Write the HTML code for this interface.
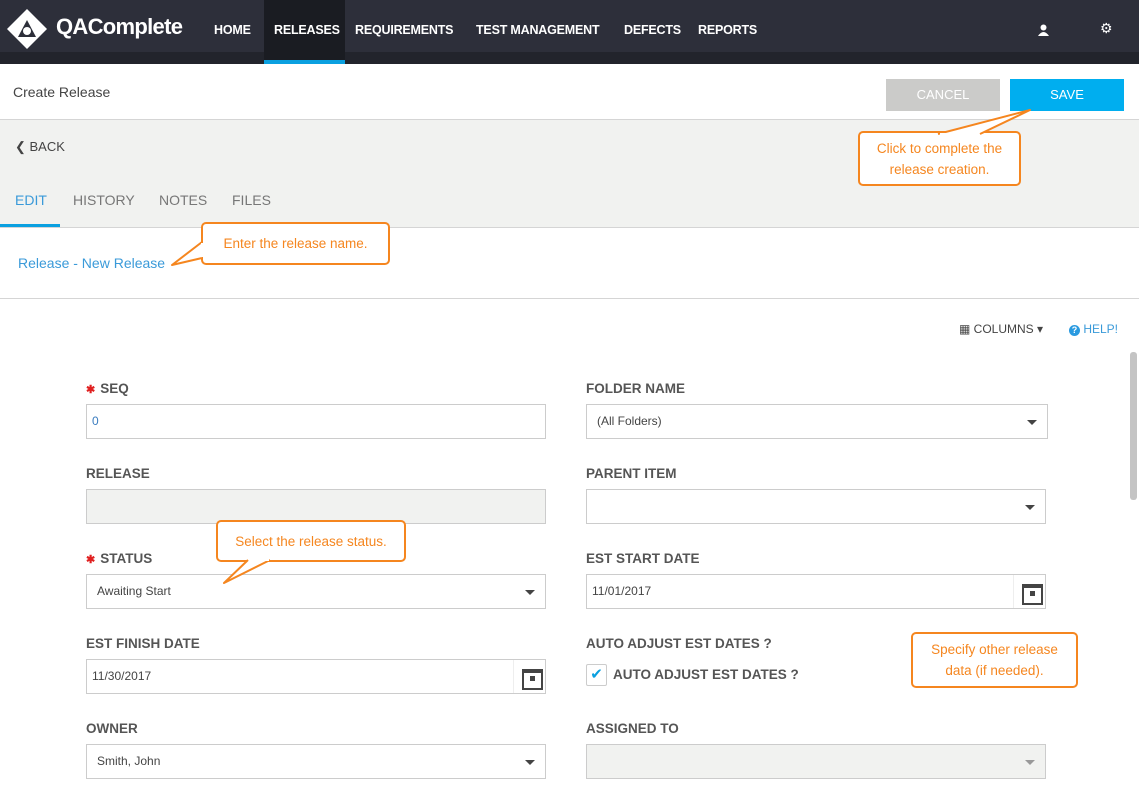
<!DOCTYPE html>
<html><head><style>
*{box-sizing:border-box;margin:0;padding:0}
body{width:1139px;height:805px;overflow:hidden;background:#fff;font-family:"Liberation Sans",sans-serif;position:relative}
.a{position:absolute}
.nav{left:0;top:0;width:1139px;height:52px;background:#2d2f3a}
.nav2{left:0;top:52px;width:1139px;height:12px;background:#22242c}
.ni{top:0;height:60px;line-height:60px;color:#fff;font-weight:bold;font-size:12.5px;padding:0 10px;letter-spacing:-0.2px}
.lbl{font-size:13.5px;font-weight:bold;color:#555}
.inp{border:1px solid #ccc;height:35px;background:#fff;font-size:12px;color:#444;line-height:33px;padding-left:10px}
.caret{position:absolute;right:10px;top:15px;border-left:5px solid transparent;border-right:5px solid transparent;border-top:5px solid #444}
.co{border:2px solid #f5861f;border-radius:5px;background:#fff;color:#f5861f;font-size:14px;text-align:center;line-height:21px}
.cal{position:absolute;right:0;top:0;width:32px;height:33px;border-left:1px solid #eee}
.cal:before{content:"";position:absolute;left:8px;top:9px;width:17px;height:15px;border:2px solid #444;border-top-width:4px}
.cal:after{content:"";position:absolute;left:16px;top:16px;width:5px;height:5px;background:#444}
.star{color:#e02020;font-size:11px;margin-right:5px}
</style></head><body>
<div class="a nav"></div><div class="a nav2"></div>
<svg class="a" style="left:6px;top:8px" width="42" height="42" viewBox="0 0 42 42"><path d="M21 1 L41 21 L21 41 L1 21Z" fill="#fff"/><path d="M21 12 L12 29 L30 29 Z" fill="#2d2f3a"/><circle cx="21" cy="23" r="4" fill="#fff"/></svg>
<div class="a" style="left:56px;top:14px;color:#fff;font-size:22px;font-weight:bold;letter-spacing:-0.7px">QAComplete</div>
<div class="a ni" style="left:204px">HOME</div>
<div class="a ni" style="left:264px;width:81px;background:#1a1c22;height:60px">RELEASES</div>
<div class="a" style="left:264px;top:60px;width:81px;height:4px;background:#0aa0e0"></div>
<div class="a ni" style="left:345px">REQUIREMENTS</div>
<div class="a ni" style="left:466px">TEST MANAGEMENT</div>
<div class="a ni" style="left:614px">DEFECTS</div>
<div class="a ni" style="left:688px">REPORTS</div>
<svg class="a" style="left:1038px;top:24px" width="11" height="12"><circle cx="5.5" cy="3.5" r="3" fill="#fff"/><path d="M0 12 Q5.5 4 11 12Z" fill="#fff"/></svg>
<div class="a" style="left:1100px;top:20px;color:#fff;font-size:14px">⚙</div>

<div class="a" style="left:13px;top:84px;font-size:14px;color:#444">Create Release</div>
<div class="a" style="left:886px;top:79px;width:114px;height:32px;background:#cbcbc9;color:#fff;font-size:13px;text-align:center;line-height:32px">CANCEL</div>
<div class="a" style="left:1010px;top:79px;width:114px;height:32px;background:#00aeef;color:#fff;font-size:13px;text-align:center;line-height:32px">SAVE</div>
<div class="a" style="left:0;top:119px;width:1139px;height:109px;background:#f1f2f0;border-top:1px solid #d5d5d5;border-bottom:1px solid #d5d5d5"></div>
<div class="a" style="left:15px;top:139px;font-size:13px;color:#444">&#10094; BACK</div>
<div class="a" style="left:15px;top:192px;font-size:14px;color:#3a9ad9">EDIT</div>
<div class="a" style="left:0;top:224px;width:60px;height:3px;background:#0aa0e0"></div>
<div class="a" style="left:73px;top:192px;font-size:14px;color:#777">HISTORY</div>
<div class="a" style="left:159px;top:192px;font-size:14px;color:#777">NOTES</div>
<div class="a" style="left:232px;top:192px;font-size:14px;color:#777">FILES</div>

<div class="a co" style="left:858px;top:131px;width:163px;height:55px;padding-top:5px;font-size:13.5px">Click to complete the<br>release creation.</div>
<svg class="a" style="left:900px;top:100px" width="140" height="40"><path d="M38 34 L130 10 L80 34" fill="#fff" stroke="#f5861f" stroke-width="2" stroke-linejoin="round"/><rect x="40" y="33" width="38" height="5" fill="#fff"/></svg>

<div class="a" style="left:18px;top:255px;font-size:14px;color:#3a9ad9">Release - New Release</div>
<div class="a co" style="left:201px;top:222px;width:189px;height:43px;line-height:40px;font-size:13.5px">Enter the release name.</div>
<svg class="a" style="left:165px;top:230px" width="45" height="40"><path d="M37 12 L7 35 L37 28" fill="#fff" stroke="#f5861f" stroke-width="2" stroke-linejoin="round"/><rect x="36" y="13" width="5" height="14" fill="#fff"/></svg>
<div class="a" style="left:0;top:298px;width:1139px;height:1px;background:#d5d5d5"></div>

<div class="a" style="left:959px;top:322px;font-size:12px;color:#444">▦ COLUMNS ▾</div>
<div class="a" style="left:1069px;top:322px;font-size:12px;color:#3a9ad9"><span style="display:inline-block;width:11px;height:11px;border-radius:50%;background:#2a9ae0;color:#fff;font-size:9px;text-align:center;line-height:11px;font-weight:bold">?</span> HELP!</div>
<div class="a" style="left:1130px;top:352px;width:7px;height:148px;background:#c4c4c4;border-radius:3px"></div>

<div class="a lbl" style="left:86px;top:381px"><span class="star">✱</span>SEQ</div>
<div class="a inp" style="left:86px;top:404px;width:460px;color:#3a7cbf;padding-left:5px">0</div>
<div class="a lbl" style="left:586px;top:381px">FOLDER NAME</div>
<div class="a inp" style="left:586px;top:404px;width:462px">(All Folders)<span class="caret"></span></div>

<div class="a lbl" style="left:86px;top:466px">RELEASE</div>
<div class="a inp" style="left:86px;top:489px;width:460px;background:#f1f2f0"></div>
<div class="a lbl" style="left:586px;top:466px">PARENT ITEM</div>
<div class="a inp" style="left:586px;top:489px;width:460px"><span class="caret"></span></div>

<div class="a lbl" style="left:86px;top:551px"><span class="star">✱</span>STATUS</div>
<div class="a inp" style="left:86px;top:574px;width:460px">Awaiting Start<span class="caret"></span></div>
<div class="a lbl" style="left:586px;top:551px">EST START DATE</div>
<div class="a inp" style="left:586px;top:574px;width:460px;padding-left:5px">11/01/2017<span class="cal"></span></div>
<div class="a co" style="left:216px;top:520px;width:190px;height:42px;line-height:39px;font-size:13.5px">Select the release status.</div>
<svg class="a" style="left:215px;top:555px" width="70" height="35"><path d="M55 5 L9 28 L33 5" fill="#fff" stroke="#f5861f" stroke-width="2" stroke-linejoin="round"/><rect x="34" y="1" width="20" height="5" fill="#fff"/></svg>

<div class="a lbl" style="left:86px;top:636px">EST FINISH DATE</div>
<div class="a inp" style="left:86px;top:659px;width:460px;padding-left:5px">11/30/2017<span class="cal"></span></div>
<div class="a lbl" style="left:586px;top:636px">AUTO ADJUST EST DATES ?</div>
<div class="a" style="left:586px;top:664px;width:21px;height:22px;border:1px solid #ccc;border-radius:2px;color:#0aa0e0;font-size:15px;text-align:center;line-height:20px">✔</div>
<div class="a lbl" style="left:613px;top:667px">AUTO ADJUST EST DATES ?</div>
<div class="a co" style="left:911px;top:632px;width:167px;height:56px;padding-top:5px;font-size:13.5px">Specify other release<br>data (if needed).</div>

<div class="a lbl" style="left:86px;top:721px">OWNER</div>
<div class="a inp" style="left:86px;top:744px;width:460px">Smith, John<span class="caret"></span></div>
<div class="a lbl" style="left:586px;top:721px">ASSIGNED TO</div>
<div class="a inp" style="left:586px;top:744px;width:460px;background:#f1f2f0"><span class="caret" style="border-top-color:#999"></span></div>
</body></html>
